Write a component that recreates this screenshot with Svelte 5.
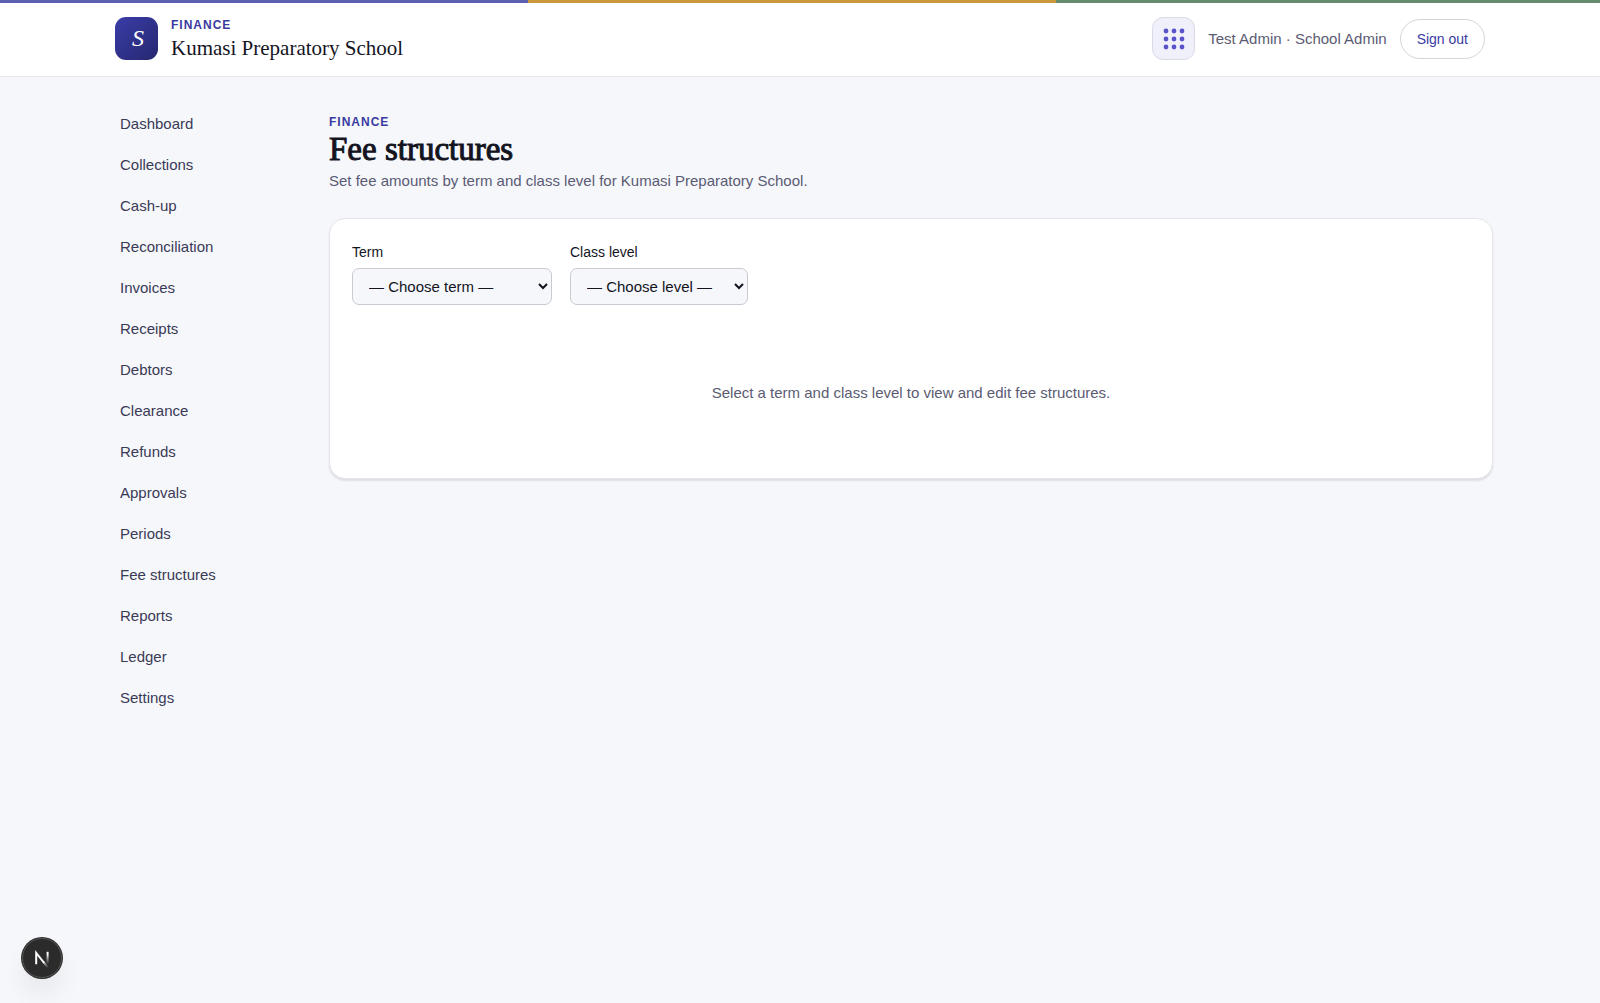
<script>
  const links = [
    'Dashboard', 'Collections', 'Cash-up', 'Reconciliation', 'Invoices',
    'Receipts', 'Debtors', 'Clearance', 'Refunds', 'Approvals',
    'Periods', 'Fee structures', 'Reports', 'Ledger', 'Settings'
  ];
  const dots = [5, 13, 21];
  let term = $state('');
  let level = $state('');
</script>

<div class="page">
  <header>
    <div class="bar">
      <div class="brand">
        <span class="logo">S</span>
        <div>
          <p class="eyebrow">FINANCE</p>
          <p class="school">Kumasi Preparatory School</p>
        </div>
      </div>
      <div class="account">
        <button class="apps" aria-label="Apps">
          <svg viewBox="0 0 26 26" width="26" height="26" aria-hidden="true">
            {#each dots as y}
              {#each dots as x}
                <circle cx={x} cy={y} r="2.4" />
              {/each}
            {/each}
          </svg>
        </button>
        <span class="user">Test Admin · School Admin</span>
        <button class="signout">Sign out</button>
      </div>
    </div>
  </header>

  <div class="shell">
    <nav aria-label="Finance">
      {#each links as link}
        <a href="#{link.toLowerCase().replace(' ', '-')}">{link}</a>
      {/each}
    </nav>
    <main>
      <p class="eyebrow">FINANCE</p>
      <h1>Fee structures</h1>
      <p class="lead">Set fee amounts by term and class level for Kumasi Preparatory School.</p>
      <section class="card">
        <div class="filters">
          <div class="field term">
            <label for="term">Term</label>
            <select id="term" bind:value={term}>
              <option value="">— Choose term —</option>
            </select>
          </div>
          <div class="field level">
            <label for="level">Class level</label>
            <select id="level" bind:value={level}>
              <option value="">— Choose level —</option>
            </select>
          </div>
        </div>
        <p class="empty">Select a term and class level to view and edit fee structures.</p>
      </section>
    </main>
  </div>

  <button class="devtools" aria-label="Open developer tools">
    <svg viewBox="0 0 42 42" width="42" height="42" fill="none" aria-hidden="true">
      <defs>
        <linearGradient id="diagonal" x1="22" y1="22" x2="28" y2="30" gradientUnits="userSpaceOnUse">
          <stop stop-color="#fff" />
          <stop offset="1" stop-color="#fff" stop-opacity="0" />
        </linearGradient>
        <linearGradient id="stem" x1="27" y1="17" x2="27" y2="27" gradientUnits="userSpaceOnUse">
          <stop stop-color="#fff" />
          <stop offset="1" stop-color="#fff" stop-opacity="0" />
        </linearGradient>
      </defs>
      <circle cx="21" cy="21" r="19.5" stroke="#666" stroke-width="0.7" />
      <path d="M15.2 27.2V15.8L23.2 26" stroke="#fff" stroke-width="2" />
      <path d="M22.4 25L27 30.5" stroke="url(#diagonal)" stroke-width="2" />
      <path d="M26.6 14.8V27" stroke="url(#stem)" stroke-width="2" />
    </svg>
  </button>
</div>

<style>
  :global(body) {
    background: #f5f7fb;
  }
  .page {
    min-height: 100vh;
    box-sizing: border-box;
    color: #14141f;
    font: 15px/24px "Liberation Sans", Arial, sans-serif;
    background: #f5f7fb;
  }
  p, h1 {
    margin: 0;
  }
  button, select {
    font-family: inherit;
    box-sizing: border-box;
  }
  header {
    background: #fff;
    border-bottom: 1px solid #e4e6ec;
  }
  header::before {
    content: "";
    display: block;
    height: 3px;
    background: linear-gradient(90deg, #5d5fb0 33%, #cc983c 33% 66%, #658c6c 66%);
  }
  .bar {
    display: flex;
    align-items: center;
    justify-content: space-between;
    max-width: 1370px;
    margin: 0 auto;
    padding: 12px 0 14px;
  }
  .brand {
    display: flex;
    align-items: center;
    gap: 13px;
  }
  .logo {
    display: grid;
    place-items: center;
    width: 43px;
    height: 43px;
    box-sizing: border-box;
    padding-left: 3px;
    border-radius: 11px;
    background: linear-gradient(135deg, #3a3da8, #25276f);
    color: #fff;
    font: italic 24px/43px "Liberation Serif", "Times New Roman", serif;
  }
  .eyebrow {
    color: #3a3a9f;
    font-size: 12px;
    font-weight: 700;
    line-height: 20px;
    letter-spacing: 1px;
  }
  .school {
    font: 21px/27px "Liberation Serif", "Times New Roman", serif;
  }
  .account {
    display: flex;
    align-items: center;
    gap: 13px;
  }
  .apps {
    display: grid;
    place-items: center;
    width: 43px;
    height: 43px;
    padding: 0;
    border: 1px solid #dadbe8;
    border-radius: 11px;
    background: #eff0fa;
  }
  .apps circle {
    fill: #5a54cb;
  }
  .user {
    color: #5b5b73;
  }
  .signout {
    height: 40px;
    padding: 0 16px;
    border: 1px solid #d5d5da;
    border-radius: 20px;
    background: #fff;
    color: #3a3a9f;
    font-size: 14px;
  }
  .shell {
    display: grid;
    grid-template-columns: 196px 1fr;
    gap: 26px;
    max-width: 1386px;
    margin: 0 auto;
    padding-top: 27px;
  }
  nav {
    display: flex;
    flex-direction: column;
  }
  nav a {
    padding: 8px 13px 9px;
    color: #3a3a56;
    text-decoration: none;
  }
  main {
    padding-top: 8px;
  }
  h1 {
    color: #14141f;
    font: 400 33px/34px "Liberation Serif", "Times New Roman", serif;
    -webkit-text-stroke: 1px #14141f;
  }
  .lead {
    padding-top: 3px;
    color: #5b5b73;
  }
  .card {
    margin-top: 25px;
    padding: 21px 22px 73px;
    border: 1px solid #e4e5eb;
    border-radius: 16px;
    background: #fff;
    box-shadow: 0 2px 2px rgba(20, 20, 31, 0.1);
  }
  .filters {
    display: flex;
    gap: 18px;
  }
  .field {
    display: flex;
    flex-direction: column;
    gap: 4px;
  }
  .term {
    width: 200px;
  }
  .level {
    width: 178px;
  }
  label {
    font-size: 14px;
  }
  select {
    height: 37px;
    padding: 0 0 0 12px;
    border: 1px solid #c9cad2;
    border-radius: 7px;
    background-color: #f5f7fb;
    color: #14141f;
    font-size: 15px;
  }
  .empty {
    padding-top: 76px;
    color: #5b5b73;
    text-align: center;
  }
  .devtools {
    position: fixed;
    left: 21px;
    bottom: 24px;
    width: 42px;
    height: 42px;
    padding: 0;
    border: 0;
    border-radius: 50%;
    background: #2b2b2b;
    box-shadow: 0 16px 24px rgba(0, 0, 0, 0.06);
  }
  .devtools svg {
    display: block;
  }
</style>
